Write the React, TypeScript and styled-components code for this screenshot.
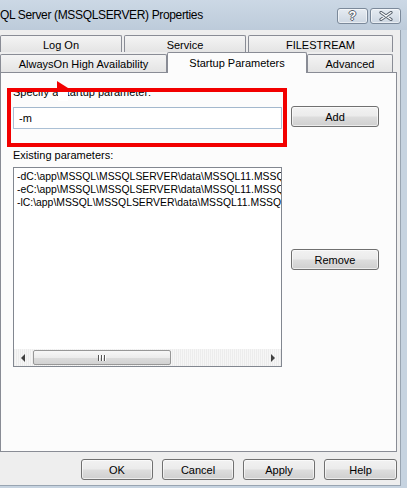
import * as React from 'react';
import styled, { createGlobalStyle } from 'styled-components';

const GlobalStyle = createGlobalStyle`
  html, body {
    margin: 0;
    padding: 0;
    background: #c6d3e0;
  }
  body {
    font-family: 'Liberation Sans', Arial, sans-serif;
    font-size: 11px;
    color: #000;
  }
`;

const Window = styled.div`
  width: 407px;
  height: 488px;
  overflow: hidden;
  background: #c6d3e0;
  display: flex;
  flex-direction: column;
`;

const TitleBar = styled.div`
  height: 30px;
  flex: none;
  display: flex;
  align-items: flex-start;
  background: linear-gradient(#ccd8e5, #bdcbda);
  padding-right: 6px;
  box-sizing: border-box;
`;

const Title = styled.div`
  flex: 1;
  font-size: 12px;
  line-height: 30px;
  letter-spacing: -0.35px;
  white-space: nowrap;
  color: #000;
`;

const CaptionButtons = styled.div`
  display: flex;
  gap: 2px;
  margin-top: 8px;
`;

const CaptionButton = styled.div<{ $w: number }>`
  width: ${({ $w }) => $w}px;
  height: 16px;
  box-sizing: border-box;
  border: 1px solid #7b899a;
  border-radius: 3px;
  background: linear-gradient(#e6ecf2, #cdd7e2);
  box-shadow: inset 0 0 0 1px rgba(255, 255, 255, 0.55);
  display: flex;
  align-items: center;
  justify-content: center;
`;

const HelpGlyph = styled.span`
  font: bold 12px 'Liberation Sans', Arial, sans-serif;
  color: #fff;
  line-height: 14px;
  text-shadow: 1px 0 0 #56606c, -1px 0 0 #56606c, 0 1px 0 #56606c, 0 -1px 0 #56606c;
`;

const Client = styled.div`
  width: 401px;
  height: 456px;
  box-sizing: border-box;
  background: #eeeeee;
  border-right: 1px solid #98a4b1;
  border-bottom: 1px solid #98a4b1;
  padding-top: 5px;
  display: flex;
  flex-direction: column;
`;

const TabRow = styled.div<{ $h: number }>`
  display: flex;
  align-items: flex-end;
  height: ${({ $h }) => $h}px;
  flex: none;
`;

const Tab = styled.div<{ $w: number; $h: number; $selected?: boolean; $gap?: number }>`
  width: ${({ $w }) => $w}px;
  height: ${({ $h }) => $h}px;
  margin-right: ${({ $gap }) => $gap ?? 0}px;
  box-sizing: border-box;
  border: 1px solid #898c95;
  border-bottom: none;
  border-radius: 2px 2px 0 0;
  background: ${({ $selected }) =>
    $selected ? '#fcfcfc' : 'linear-gradient(#f4f4f4, #e4e4e4)'};
  display: flex;
  justify-content: center;
  align-items: center;
  padding-top: ${({ $selected }) => ($selected ? 0 : 1)}px;
  margin-bottom: ${({ $selected }) => ($selected ? -1 : 0)}px;
  position: relative;
  z-index: ${({ $selected }) => ($selected ? 1 : 0)};
  white-space: nowrap;
  font-size: 11px;
`;

const Panel = styled.div`
  width: 397px;
  height: 380px;
  box-sizing: border-box;
  border: 1px solid #898c95;
  background: #fcfcfc;
  position: relative;
  display: grid;
  grid-template-columns: 269px 88px;
  column-gap: 9px;
  padding-left: 12px;
  flex: none;
`;

const LeftColumn = styled.div`
  display: flex;
  flex-direction: column;
  padding-top: 13px;
`;

const RightColumn = styled.div`
  display: flex;
  flex-direction: column;
  padding-top: 33px;
`;

const FieldLabel = styled.div<{ $top?: number }>`
  line-height: 13px;
  height: 13px;
  margin-top: ${({ $top }) => $top ?? 0}px;
  white-space: nowrap;
`;

const TextInput = styled.div`
  margin-top: 8px;
  height: 22px;
  box-sizing: border-box;
  border: 1px solid #abc0d5;
  border-top-color: #a3b8cd;
  background: #fff;
  padding-left: 5px;
  line-height: 20px;
`;

const ListBox = styled.div`
  margin-top: 5px;
  height: 200px;
  box-sizing: border-box;
  border: 1px solid #828790;
  background: #fff;
  display: flex;
  flex-direction: column;
`;

const ListLines = styled.div`
  flex: 1;
  overflow: hidden;
  padding: 2px 0 0 3px;
`;

const ListLine = styled.div`
  height: 13px;
  line-height: 13px;
  font-size: 10.4px;
  white-space: nowrap;
`;

const ScrollBar = styled.div`
  height: 17px;
  flex: none;
  display: flex;
  align-items: center;
  background: repeating-linear-gradient(90deg, #ececec 0 1px, #f6f6f6 1px 2px);
`;

const ScrollArrow = styled.div<{ $dir: 'left' | 'right' }>`
  width: 17px;
  height: 17px;
  display: flex;
  align-items: center;
  justify-content: center;
  &::before {
    content: '';
    width: 0;
    height: 0;
    border-top: 4px solid transparent;
    border-bottom: 4px solid transparent;
    ${({ $dir }) =>
      $dir === 'left' ? 'border-right: 4px solid #404040;' : 'border-left: 4px solid #404040;'}
  }
`;

const ScrollThumb = styled.div`
  margin-left: 2px;
  width: 138px;
  height: 15px;
  box-sizing: border-box;
  border: 1px solid #979797;
  border-radius: 2px;
  background: linear-gradient(#f7f7f7 0%, #ececec 50%, #dcdcdc 51%, #d2d2d2 100%);
  display: flex;
  align-items: center;
  justify-content: center;
  gap: 1px;
`;

const Grip = styled.span`
  width: 1px;
  height: 6px;
  background: #555;
  box-shadow: 1px 0 0 #fff;
  margin-right: 1px;
`;

const Spacer = styled.div`
  flex: 1;
`;

const Button = styled.button<{ $w: number; $top?: number }>`
  width: ${({ $w }) => $w}px;
  height: 21px;
  margin-top: ${({ $top }) => $top ?? 0}px;
  box-sizing: border-box;
  border: 1px solid #707070;
  border-radius: 3px;
  background: linear-gradient(#f2f2f2 0%, #ebebeb 48%, #dddddd 52%, #cfcfcf 100%);
  box-shadow: inset 0 0 0 1px rgba(255, 255, 255, 0.6);
  font: 11px 'Liberation Sans', Arial, sans-serif;
  color: #000;
  padding: 0;
  flex: none;
`;

const Footer = styled.div`
  display: flex;
  justify-content: flex-end;
  gap: 9px;
  padding-right: 3px;
  margin-top: 7px;
`;

/* annotation drawn over the screenshot */
const RedBox = styled.div`
  position: absolute;
  left: 6px;
  top: 15px;
  width: 280px;
  height: 59px;
  box-sizing: border-box;
  border: 4px solid #f20000;
  z-index: 2;
`;

const Arrow = styled.svg`
  position: absolute;
  left: 55px;
  top: 7px;
  z-index: 3;
`;

const Patch = styled.div`
  position: absolute;
  left: 57px;
  top: 19px;
  width: 10px;
  height: 9px;
  background: #fff;
  z-index: 3;
`;

const params = [
  '-dC:\\app\\MSSQL\\MSSQLSERVER\\data\\MSSQL11.MSSQLSERVER\\MSSQL\\DATA\\master.mdf',
  '-eC:\\app\\MSSQL\\MSSQLSERVER\\data\\MSSQL11.MSSQLSERVER\\MSSQL\\Log\\ERRORLOG',
  '-lC:\\app\\MSSQL\\MSSQLSERVER\\data\\MSSQL11.MSSQLSERVER\\MSSQL\\DATA\\mastlog.ldf',
];

export default function App() {
  return (
    <>
      <GlobalStyle />
      <Window>
        <TitleBar>
          <Title>QL Server (MSSQLSERVER) Properties</Title>
          <CaptionButtons>
            <CaptionButton $w={31}>
              <HelpGlyph>?</HelpGlyph>
            </CaptionButton>
            <CaptionButton $w={31}>
              <svg width="14" height="10" viewBox="0 0 14 10">
                <path d="M2 1.5 L12 8.5 M12 1.5 L2 8.5" stroke="#56606c" strokeWidth="3.2" strokeLinecap="round" />
                <path d="M2 1.5 L12 8.5 M12 1.5 L2 8.5" stroke="#fff" strokeWidth="1.3" strokeLinecap="round" />
              </svg>
            </CaptionButton>
          </CaptionButtons>
        </TitleBar>
        <Client>
          <TabRow $h={17}>
            <Tab $w={122} $h={17} $gap={2}>Log On</Tab>
            <Tab $w={122} $h={17} $gap={2}>Service</Tab>
            <Tab $w={145} $h={17}>FILESTREAM</Tab>
          </TabRow>
          <TabRow $h={20}>
            <Tab $w={167} $h={18}>AlwaysOn High Availability</Tab>
            <Tab $w={140} $h={21} $selected>Startup Parameters</Tab>
            <Tab $w={86} $h={18}>Advanced</Tab>
          </TabRow>
          <Panel>
            <LeftColumn>
              <FieldLabel>Specify a startup parameter:</FieldLabel>
              <TextInput>-m</TextInput>
              <FieldLabel $top={20}>Existing parameters:</FieldLabel>
              <ListBox>
                <ListLines>
                  {params.map((p) => (
                    <ListLine key={p}>{p}</ListLine>
                  ))}
                </ListLines>
                <ScrollBar>
                  <ScrollArrow $dir="left" />
                  <ScrollThumb>
                    <Grip />
                    <Grip />
                    <Grip />
                  </ScrollThumb>
                  <Spacer />
                  <ScrollArrow $dir="right" />
                </ScrollBar>
              </ListBox>
            </LeftColumn>
            <RightColumn>
              <Button $w={88}>Add</Button>
              <Button $w={88} $top={122}>Remove</Button>
            </RightColumn>
            <RedBox />
            <Arrow width="14" height="14" viewBox="0 0 14 14">
              <polygon points="1,1 12,8 6,12 1,10" fill="#f20000" />
            </Arrow>
            <Patch />
          </Panel>
          <Footer>
            <Button $w={72}>OK</Button>
            <Button $w={72}>Cancel</Button>
            <Button $w={72}>Apply</Button>
            <Button $w={73}>Help</Button>
          </Footer>
        </Client>
      </Window>
    </>
  );
}
